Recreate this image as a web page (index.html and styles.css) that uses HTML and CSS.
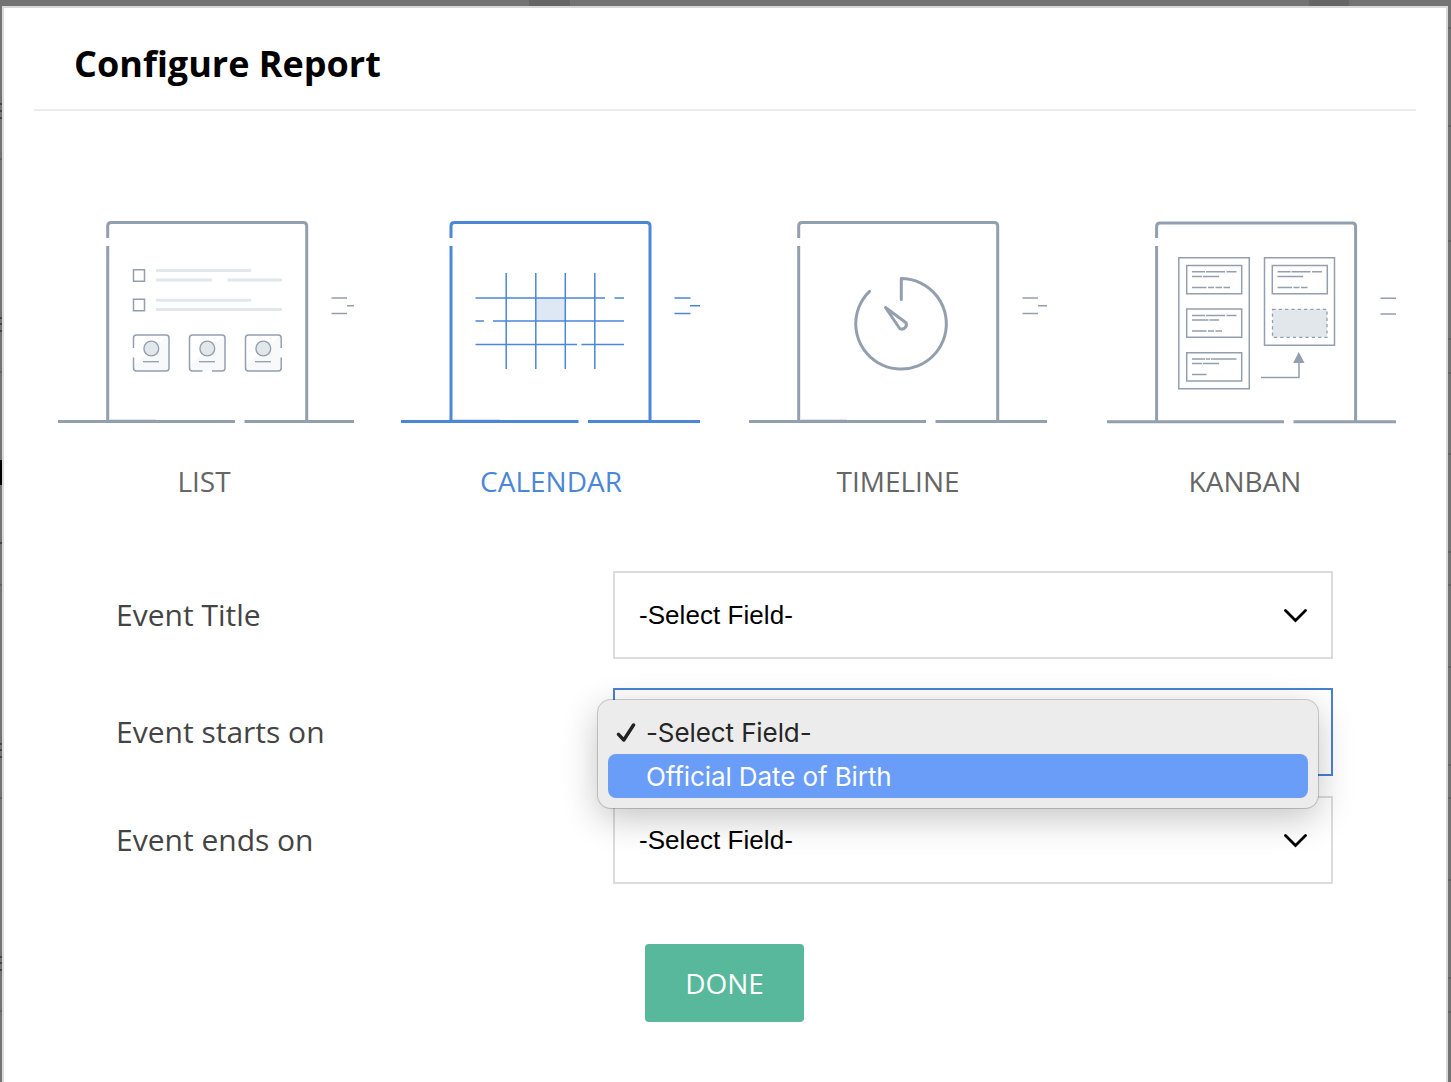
FILE: index.html
```html
<!DOCTYPE html>
<html lang="en">
<head>
<meta charset="utf-8">
<title>Configure Report</title>
<link rel="stylesheet" href="styles.css">
</head>
<body>
<svg class="backdrop" width="1451" height="1082" aria-hidden="true">
  <path d="M529 0h41v6h-41zM1309 0h40v6h-40z" fill="#666"/>
  <path d="M0 460h2v25H0z" fill="#000"/>
  <path d="M0 104h2M0 111h2M0 118h2M0 318h2M0 324h2M0 331h2M0 543h2M0 744h2M0 750h2M0 757h2M0 957h2M0 963h2M0 970h2" stroke="#444" stroke-width="2"/>
  <path d="M1448 28h3M1448 126h3M1448 241h3M1448 339h3M1448 373h3M1448 454h3M1448 552h3M1448 585h3M1448 667h3M1448 765h3M1448 798h3M1448 880h3M1448 978h3M1448 1012h3M0 159h2M0 372h2M0 585h2M0 798h2M0 1011h2" stroke="#626262" stroke-width="2"/>
</svg>
<main class="modal">
  <header class="modal-header"><h1 class="modal-title">Configure Report</h1></header>

  <section class="types">
    <div class="type">
      <svg class="type-art" viewBox="31 210 347 225" fill="none" stroke="#939fae">
        <path stroke-width="3" d="M107.700 238v-12q0-3.500 3.500-3.500h92.500h99.500q3.500 0 3.500 3.500V421M107.700 246V421M58 421.500H235M244.500 421.500H354"/>
        <path stroke="#dfe4e9" d="M109 419.500h47"/>
        <path stroke-width="1.500" d="M133.500 269.700h11v11.500h-11zM133.500 299.200h11v11.500h-11z"/>
        <path stroke="#e2e7eb" stroke-width="3" d="M156 270.500h95M156 280h56M227.500 280H282M156 300.300h95M156 309.600h126"/>
        <g id="person">
          <path fill="#f7f9fa" stroke="none" d="M134 365l34-29v35h-34z"/>
          <circle cx="151.300" cy="348.500" r="7.400" fill="#e2e7eb" stroke-width="1.400"/>
          <path stroke-width="1.300" d="M143 361.700h16"/>
        </g>
        <use href="#person" x="56"/><use href="#person" x="112"/>
        <path stroke-width="1.500" d="M133.500 348v-10q0-3 3-3h29.500q3 0 3 3v30q0 3-3 3h-29.500q-3 0-3-3v-10.500M202.500 371h-10q-3 0-3-3v-30q0-3 3-3h29.500q3 0 3 3v30q0 3-3 3h-10M281.200 348v-10q0-3-3-3h-29.700q-3 0-3 3v30q0 3 3 3h29.700q3 0 3-3v-10.500"/>
        <path stroke-width="1.500" d="M331.500 298H347M347 305.700h7M331.500 313.500H347"/>
      </svg>
      <span class="type-label">LIST</span>
    </div>

    <div class="type type-active">
      <svg class="type-art" viewBox="378 210 347 225" fill="none" stroke="#4c86d6">
        <path stroke-width="3" d="M451 238v-12q0-3.500 3.500-3.500h92.500h99.500q3.500 0 3.500 3.500V421M451 246V421M401 421.500H578.500M588 421.500H700"/>
        <path stroke="#d5e2f5" d="M453 419.500h47"/>
        <path fill="#dee8f5" stroke="none" d="M536 298h29.500v23H536z"/>
        <path stroke-width="1.500" d="M506.200 273v96M535.800 273v96M565.300 273v96M594.800 273v96M475.500 298H605M614.500 298h9.500M475.500 321h8.500M493 321h131M475.500 344.500H577M581.500 344.500H624M674.500 298H690.500M690 305.700h10M674.500 313.500H690.500"/>
      </svg>
      <span class="type-label">CALENDAR</span>
    </div>

    <div class="type">
      <svg class="type-art" viewBox="725 210 347 225" fill="none" stroke="#939fae">
        <path stroke-width="3" d="M798.700 238v-12q0-3.500 3.500-3.500h92.500h99.500q3.500 0 3.500 3.500V421M798.700 246V421M749 421.500H926M935.500 421.500H1047"/>
        <path stroke="#dfe4e9" d="M800 419.500h47"/>
        <path stroke-width="3" stroke-linecap="round" stroke-linejoin="round" d="M869.500 291.300A45.300 45.300 0 1 0 901.300 278.500V299.500M885.500 307.500l20.500 15.300a4.500 4.500 0 0 1-6.300 5.700z"/>
        <path stroke-width="1.500" d="M1022.500 298H1038M1038 305.700h9M1022.500 313.500H1038"/>
      </svg>
      <span class="type-label">TIMELINE</span>
    </div>

    <div class="type">
      <svg class="type-art" viewBox="1072 210 347 225" fill="none" stroke="#939fae">
        <path stroke-width="3" d="M1156.600 238v-11.500q0-3.500 3.500-3.500h192q3.500 0 3.500 3.500V421M1156.600 246V421M1107 421.800H1284M1293.500 421.800H1396"/>
        <path stroke-width="1.500" d="M1178.800 257.800h70.500v131h-70.500zM1264.500 257.800h70v87.500h-70zM1186.700 265.500h55v28.300h-55zM1186.700 309h55v28.300h-55zM1186.700 352.700h55V381h-55zM1272.300 265.500h55v28.300h-55z"/>
        <path fill="#e2e7eb" stroke="none" d="M1272.500 309.300h54.500v28h-54.500z"/>
        <path stroke-width="1.300" stroke-dasharray="3.200 3.100" d="M1272.500 309.300h54.500v28h-54.500z"/>
        <g stroke-width="1.500">
          <path d="M1192 271.700h13M1206 271.700h19M1226.500 271.700h10M1192 276.400h10M1203 276.400h16M1192 287.400h14.500M1208 287.400h6M1215.500 287.400h6.500M1223.500 287.400h6.500"/>
          <path d="M1192 315.400h13M1206 315.400h19M1226.500 315.400h10M1192 320h16.500M1209.500 320h9.500M1192 331h14.500M1208 331h6M1215.500 331h6.500"/>
          <path d="M1192 359h13M1206 359h4M1211 359h25.500M1192 363.500h10M1203 363.500h16M1192 374.400h14.500"/>
          <path d="M1277.500 271.700h13M1291.500 271.700h19M1312 271.700h10M1277.500 276.400h25.500M1277.500 287.400h14.500M1293.500 287.400h6M1301 287.400h6.500"/>
        </g>
        <path stroke-width="1.500" d="M1261 377.500h38v-15M1380.500 298.300H1396M1380.500 314H1396"/>
        <path fill="#939fae" stroke="none" d="M1298.800 352l5.700 11h-11.400z"/>
      </svg>
      <span class="type-label">KANBAN</span>
    </div>
  </section>

  <section class="fields">
    <div class="field">
      <span class="field-label">Event Title</span>
      <div class="select"><span class="select-value">-Select Field-</span>
        <svg class="chevron" viewBox="0 0 24 16"><path d="M2.500 3.500l10 10 10-10"/></svg></div>
    </div>
    <div class="field field-start">
      <span class="field-label">Event starts on</span>
      <div class="select select-open">
        <div class="menu">
          <div class="option">
            <svg class="check" viewBox="0 0 20 20"><path d="M2.500 12.300l5.300 5.700L17.500 3"/></svg>
            <span class="option-current">-Select Field-</span>
          </div>
          <div class="option option-hover"><span>Official Date of Birth</span></div>
        </div>
      </div>
    </div>
    <div class="field">
      <span class="field-label">Event ends on</span>
      <div class="select"><span class="select-value">-Select Field-</span>
        <svg class="chevron" viewBox="0 0 24 16"><path d="M2.500 3.500l10 10 10-10"/></svg></div>
    </div>
  </section>

  <button class="done" type="button">DONE</button>
</main>
</body>
</html>
```
FILE: styles.css
```css
* { box-sizing: border-box; }

body {
  margin: 0;
  height: 1082px;
  padding: 6px 3px 0 2px;
  overflow: hidden;
  background: #737373;
  font-family: "Open Sans", sans-serif;
}

.backdrop {
  position: absolute;
  left: 0;
  top: 0;
  z-index: -1;
}

.modal {
  height: 1090px;
  display: flex;
  flex-direction: column;
  background: #fff;
  border: 2px solid #d9d9d9;
}

.modal-header {
  height: 103px;
  margin: 0 30px;
  padding: 0 40px;
  display: flex;
  align-items: center;
  border-bottom: 2px solid #ececec;
}

.modal-title {
  margin: 0;
  padding-top: 10px;
  font-size: 36px;
  line-height: 48px;
  font-weight: 700;
  color: #000;
  white-space: nowrap;
}

.types {
  display: grid;
  grid-template-columns: repeat(4, 347px);
  margin: 99px 0 0 27px;
}

.type {
  display: flex;
  flex-direction: column;
  align-items: center;
  color: #666;
}

.type-active { color: #4c86d6; }

.type-art {
  width: 347px;
  height: 225px;
}

.type-label {
  margin-top: 26px;
  padding-right: 1px;
  font-size: 28px;
  line-height: 40px;
}

.fields {
  display: flex;
  flex-direction: column;
  margin: 70px 113px 0 112px;
  gap: 20px;
}

.field {
  display: flex;
  align-items: center;
  justify-content: space-between;
}

.field-start { margin-top: 9px; }

.field-label {
  font-size: 30px;
  line-height: 40px;
  color: #444;
}

.select {
  position: relative;
  width: 720px;
  height: 88px;
  padding: 0 24px;
  display: flex;
  align-items: center;
  justify-content: space-between;
  border: 2px solid #dcdcdc;
  font-family: "Liberation Sans", Arial, sans-serif;
  font-size: 26px;
  letter-spacing: 0.05px;
  color: #000;
}

.select-open { border-color: #4a80d4; }

.chevron {
  width: 24px;
  height: 16px;
  fill: none;
  stroke: #000;
  stroke-width: 2.8;
  stroke-linecap: round;
}

.menu {
  position: absolute;
  z-index: 2;
  left: -17px;
  top: 10px;
  width: 720px;
  height: 108px;
  padding: 10px;
  background: #ececec;
  border-radius: 13px;
  box-shadow: 0 0 0 1px rgba(0, 0, 0, .18), 0 10px 36px rgba(0, 0, 0, .24);
  font-family: Inter, sans-serif;
  font-size: 26px;
  letter-spacing: -0.1px;
  color: #262626;
}

.option {
  display: flex;
  align-items: center;
  height: 44px;
  padding-left: 8px;
  white-space: nowrap;
}

.check {
  width: 20px;
  height: 20px;
  margin-right: 10px;
  fill: none;
  stroke: #222;
  stroke-width: 3.4;
  stroke-linecap: round;
  stroke-linejoin: round;
}

.option-hover {
  padding-left: 38px;
  border-radius: 8px;
  background: #699df8;
  color: #fff;
}

.done {
  align-self: center;
  width: 159px;
  height: 78px;
  margin: 60px 1px 0 0;
  border: 0;
  border-radius: 4px;
  background: #58b89c;
  color: #fff;
  font-family: "Open Sans", sans-serif;
  font-size: 28px;
}
```
